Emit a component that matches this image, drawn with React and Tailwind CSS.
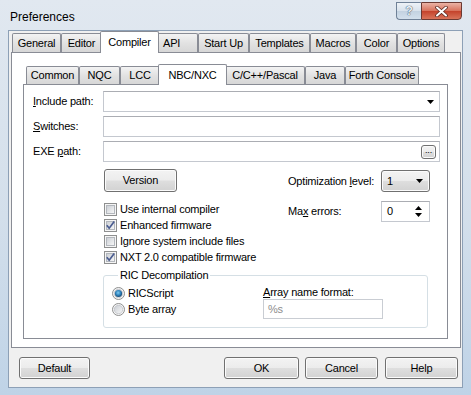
import React from 'react';

const btnBase =
  "border border-[#707070] rounded-[3px] bg-[linear-gradient(to_bottom,#f3f3f3_0%,#ececec_48%,#dedede_52%,#d2d2d2_100%)] shadow-[inset_0_0_0_1px_#fbfbfb] flex items-center";
const btn = `${btnBase} justify-center`;
const field = "border border-[#c4c8cf] border-t-[#abadb3] bg-white";

const outerTabs = [
  { label: 'General', w: 'w-[49px]' },
  { label: 'Editor', w: 'w-[41px]' },
  { label: 'Compiler', w: 'w-[59px]', sel: true },
  { label: 'API', w: 'w-[41px] justify-start pl-[5px]' },
  { label: 'Start Up', w: 'w-[51px]' },
  { label: 'Templates', w: 'w-[61px]' },
  { label: 'Macros', w: 'w-[46px]' },
  { label: 'Color', w: 'w-[41px]' },
  { label: 'Options', w: 'w-[48px]' },
];

const innerTabs = [
  { label: 'Common', w: 'w-[53px]' },
  { label: 'NQC', w: 'w-[41px]' },
  { label: 'LCC', w: 'w-[40px]' },
  { label: 'NBC/NXC', w: 'w-[69px]', sel: true },
  { label: 'C/C++/Pascal', w: 'w-[80px]' },
  { label: 'Java', w: 'w-[40px]' },
  { label: 'Forth Console', w: 'w-[74px]' },
];

function Tabs({ tabs, row, tab, selTab }) {
  return (
    <div className={`flex items-end ${row}`}>
      {tabs.map((t) =>
        t.sel ? (
          <div
            key={t.label}
            className={`relative z-10 -mx-[2px] -mb-px bg-white border border-b-0 border-[#898c95] rounded-t-[2px] flex items-center justify-center ${selTab} ${t.w}`}
          >
            {t.label}
          </div>
        ) : (
          <div
            key={t.label}
            className={`border border-b-0 border-[#898c95] rounded-t-[2px] bg-[linear-gradient(to_bottom,#f3f3f3,#e2e2e2_50%,#d7d7d7)] flex items-center justify-center ${tab} ${t.w}`}
          >
            {t.label}
          </div>
        )
      )}
    </div>
  );
}

function Check({ checked }) {
  return (
    <svg width="13" height="13" viewBox="0 0 13 13" className="shrink-0">
      <defs>
        <linearGradient id="cbg" x1="0" y1="0" x2="1" y2="1">
          <stop offset="0" stopColor="#c9cdd3" />
          <stop offset="1" stopColor="#f8f8f8" />
        </linearGradient>
      </defs>
      <rect x="0.5" y="0.5" width="12" height="12" fill="#f5f5f5" stroke="#8e8f8f" />
      <rect x="2.5" y="2.5" width="8" height="8" fill="url(#cbg)" stroke="#b3b7bd" />
      {checked && (
        <path d="M2.8 6.2 L5.2 9.2 L10.2 2.6" fill="none" stroke="#4a5c90" strokeWidth="1.7" />
      )}
    </svg>
  );
}

function Radio({ selected }) {
  return (
    <svg width="13" height="13" viewBox="0 0 13 13" className="shrink-0">
      <defs>
        <linearGradient id="rbg" x1="0" y1="0" x2="1" y2="1">
          <stop offset="0" stopColor="#c9cdd3" />
          <stop offset="1" stopColor="#f8f8f8" />
        </linearGradient>
        <radialGradient id="rsel" cx="0.45" cy="0.4" r="0.6">
          <stop offset="0" stopColor="#7ccaf2" />
          <stop offset="0.6" stopColor="#2c7fb8" />
          <stop offset="1" stopColor="#16466f" />
        </radialGradient>
      </defs>
      <circle cx="6.5" cy="6.5" r="6" fill="#f5f5f5" stroke="#8e8f8f" />
      <circle cx="6.5" cy="6.5" r="4.2" fill="url(#rbg)" stroke="#b3b7bd" strokeWidth="0.6" />
      {selected && <circle cx="6.5" cy="6.5" r="3.6" fill="url(#rsel)" />}
    </svg>
  );
}

function DownArrow() {
  return (
    <svg width="7" height="4" viewBox="0 0 7 4">
      <path d="M0 0 H7 L3.5 4 Z" fill="#000" />
    </svg>
  );
}

function UpArrow() {
  return (
    <svg width="7" height="4" viewBox="0 0 7 4">
      <path d="M0 4 H7 L3.5 0 Z" fill="#000" />
    </svg>
  );
}

function CheckRow({ checked, children }) {
  return (
    <div className="flex items-center h-[16px]">
      <Check checked={checked} />
      <span className="ml-[3px]">{children}</span>
    </div>
  );
}

export default function App() {
  return (
    <div className="w-[471px] h-[395px] overflow-hidden bg-[linear-gradient(to_bottom,#e1e8f0,#d3dfeb_55%,#bfd3e7)] flex flex-col font-['Liberation_Sans',Arial,sans-serif] text-[11px] tracking-[-0.2px] text-black">
      {/* title bar */}
      <div className="h-[30px] flex items-start">
        <div className="ml-[10px] mt-[10px] leading-[14px] text-[12px] tracking-normal">Preferences</div>
        <div className="ml-auto mr-[9px] mt-[2px] flex h-[18px]">
          <div className="w-[25px] h-full border border-[#6f8197] border-r-0 rounded-bl-[4px] bg-[linear-gradient(to_bottom,#edf2f7,#d8e2ec_50%,#c3d2e1_52%,#d3e0ec)] flex items-center justify-center text-[12px] font-bold text-[#eef3f8] [text-shadow:0_0_1px_#34455a,0_0_1px_#34455a]">
            ?
          </div>
          <div className="w-[41px] h-full border border-[#6b3a33] rounded-br-[4px] bg-[linear-gradient(to_bottom,#eab3a5,#d8735d_48%,#c4432c_52%,#d9745a)] flex items-center justify-center">
            <svg width="13" height="11" viewBox="0 0 13 11">
              <path d="M2 1.5 L11 9.5 M11 1.5 L2 9.5" stroke="#5a2a22" strokeWidth="3.6" strokeLinecap="round" />
              <path d="M2 1.5 L11 9.5 M11 1.5 L2 9.5" stroke="#fff" strokeWidth="2" strokeLinecap="round" />
            </svg>
          </div>
        </div>
      </div>

      {/* client area */}
      <div className="mx-[8px] h-[358px] border border-[#8da0b6] bg-[#f0f0f0] pl-[2px] flex flex-col">
        <div className="pl-[1px]">
          <Tabs tabs={outerTabs} row="h-[21px]" tab="h-[19px]" selTab="h-[22px]" />
        </div>

        {/* outer tab page */}
        <div className="w-[450px] h-[296px] border border-[#898c95] bg-white pt-[11px] pl-[11px]">
          <div className="pl-[3px]">
            <Tabs tabs={innerTabs} row="h-[20px]" tab="h-[18px]" selTab="h-[21px]" />
          </div>

          {/* inner tab page */}
          <div className="w-[425px] h-[255px] border border-[#898c95] bg-white pt-[6px] flex flex-col">
            <div className="flex flex-col gap-[4px]">
              <div className="flex items-center h-[21px]">
                <div className="w-[79px] pl-[9px]">
                  <span className="underline">I</span>nclude path:
                </div>
                <div className={`w-[337px] h-full ${field} flex items-center justify-end pr-[5px]`}>
                  <DownArrow />
                </div>
              </div>
              <div className="flex items-center h-[21px]">
                <div className="w-[79px] pl-[9px]">
                  <span className="underline">S</span>witches:
                </div>
                <div className={`w-[337px] h-full ${field}`} />
              </div>
              <div className="flex items-center h-[21px]">
                <div className="w-[79px] pl-[9px]">
                  EXE <span className="underline">p</span>ath:
                </div>
                <div className={`w-[337px] h-full ${field} flex items-center justify-end pr-[3px]`}>
                  <div className={`w-[15px] h-[14px] ${btn} rounded-[2px] text-[9px] leading-none pb-[2px]`}>...</div>
                </div>
              </div>
            </div>

            <div className="flex mt-[7px]">
              <div className="w-[264px] pl-[80px] flex flex-col">
                <div className={`w-[73px] h-[23px] ${btn}`}>Version</div>
                <div className="mt-[9px] flex flex-col">
                  <CheckRow>Use internal compiler</CheckRow>
                  <CheckRow checked>Enhanced firmware</CheckRow>
                  <CheckRow>Ignore system include files</CheckRow>
                  <CheckRow checked>NXT 2.0 compatible firmware</CheckRow>
                </div>
              </div>
              <div className="flex flex-col pt-[1px]">
                <div className="flex items-center h-[22px]">
                  <div className="w-[93px]">
                    Optimization <span className="underline">l</span>evel:
                  </div>
                  <div className={`w-[49px] h-full ${btnBase} justify-between pl-[5px] pr-[6px]`}>
                    <span>1</span>
                    <DownArrow />
                  </div>
                </div>
                <div className="flex items-center h-[21px] mt-[9px]">
                  <div className="w-[93px]">
                    Ma<span className="underline">x</span> errors:
                  </div>
                  <div className={`w-[49px] h-full ${field} flex items-center justify-between pl-[5px] pr-[7px]`}>
                    <span>0</span>
                    <div className="flex flex-col gap-[3px]">
                      <UpArrow />
                      <DownArrow />
                    </div>
                  </div>
                </div>
              </div>
            </div>

            {/* RIC Decompilation group */}
            <fieldset className="ml-[79px] mt-[3px] w-[325px] h-[60px] border border-[#d5dfe5] rounded-[3px] pl-[8px]">
              <legend className="ml-[6px] px-[2px] leading-[14px]">RIC Decompilation</legend>
              <div className="flex mt-[3px]">
                <div className="w-[151px] flex flex-col">
                  <div className="flex items-center h-[16px]">
                    <Radio selected />
                    <span className="ml-[3px]">RICScript</span>
                  </div>
                  <div className="flex items-center h-[16px]">
                    <Radio />
                    <span className="ml-[3px]">Byte array</span>
                  </div>
                </div>
                <div className="flex flex-col">
                  <div className="leading-[13px] mt-[1px]">
                    <span className="underline">A</span>rray name format:
                  </div>
                  <div className="w-[120px] h-[20px] border border-[#c9cdd3] bg-white flex items-center pl-[4px] text-[#8d8d8d]">
                    %s
                  </div>
                </div>
              </div>
            </fieldset>
          </div>
        </div>

        {/* footer buttons */}
        <div className="flex items-center h-[22px] mt-[9px] pl-[8px] pr-[4px]">
          <div className={`w-[71px] h-full ${btn}`}>Default</div>
          <div className={`ml-auto w-[75px] h-full ${btn}`}>OK</div>
          <div className={`ml-[6px] w-[73px] h-full ${btn}`}>Cancel</div>
          <div className={`ml-[7px] w-[73px] h-full ${btn}`}>Help</div>
        </div>
      </div>
    </div>
  );
}
